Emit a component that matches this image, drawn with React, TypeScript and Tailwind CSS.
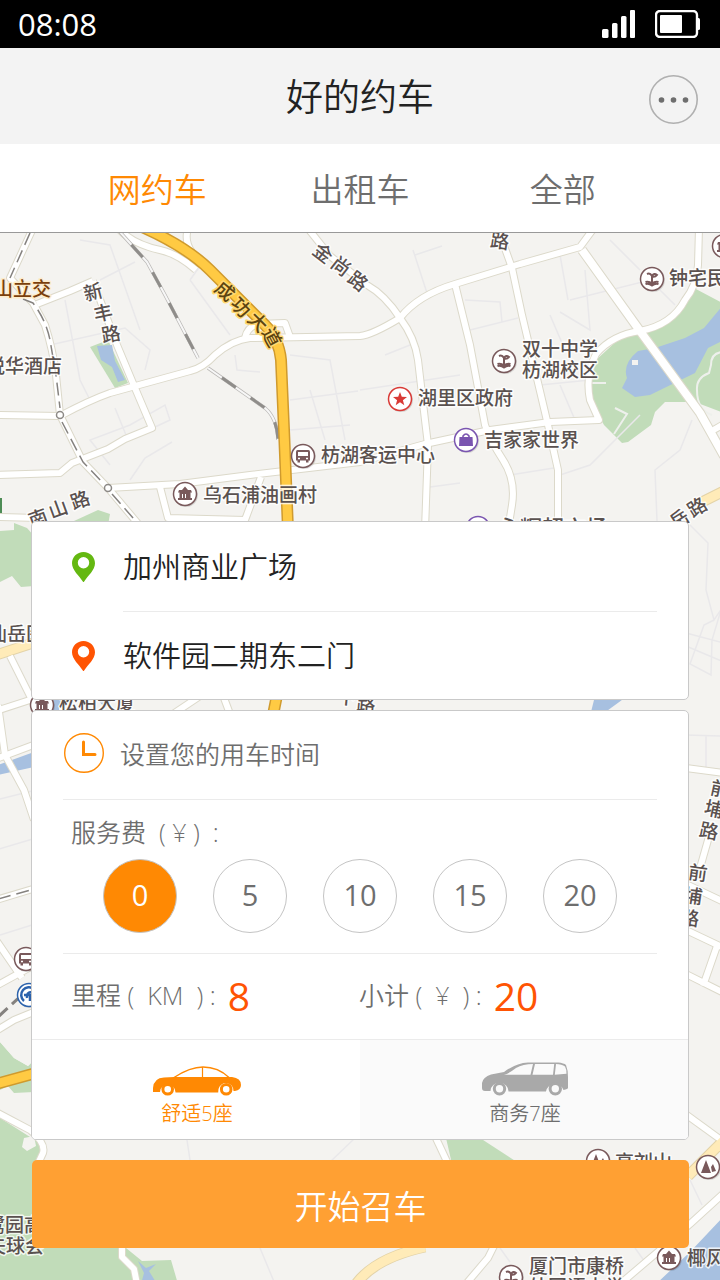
import { useState } from "react";

const HIGHWAYS = [
  "M140 226 C165 237 190 250 210 270 L265 325 Q279 339 281 360 L284 430 L288 530 L286 650 L272 720",
  "M-4 1084 L36 1073",
];

const ROADS = [
  "M34 226 L10 278 L33 303 L45 325 Q53 350 56 375 L60 415 L83 462 L108 488 L145 532",
  "M37 304 L70 291 L93 281",
  "M-4 415 L60 416 Q90 400 110 393 L190 371 Q203 368 215 355 Q232 340 250 338 L360 336 Q372 335 400 318 Q418 295 455 284 L520 264 L580 247 L594 228",
  "M93 281 L117 345 L135 388 L152 428 L125 439 L108 449 L72 463 L60 473 L-4 475",
  "M108 488 L180 484 L250 475 L360 462 L425 444 L490 430 L550 422 L599 420 L590 400 Q585 375 596 354 Q612 335 640 331 Q672 325 685 300 Q697 285 698 265 L699 228",
  "M160 487 L168 518 L245 520 L261 477",
  "M118 228 Q132 244 160 250 Q178 254 196 270",
  "M192 252 Q184 242 188 228",
  "M245 338 Q247 327 258 324 L285 323 L290 337",
  "M306 226 L330 256 L367 285 Q385 295 400 318 Q415 338 418 360 L425 420 L428 445 L425 530",
  "M497 226 L512 268 L522 315 L535 370 L548 425 L558 470 L558 530",
  "M455 284 L470 345 L485 425 Q490 440 503 460 Q516 480 512 505 L508 530",
  "M710 432 L724 424",
  "M-4 517 L38 518",
  "M10 656 L38 712",
  "M-4 711 L36 698",
  "M-2 705 L5 755 L24 790 L34 820",
  "M-4 759 L36 744",
  "M170 716 L200 696",
  "M224 698 L230 714",
  "M-4 900 L36 888",
  "M-4 940 L22 978 M-4 986 L36 964",
  "M-4 1031 L14 1020 L36 1011",
  "M-4 1112 L30 1130 Q46 1143 43 1153 L36 1168",
  "M122 1240 L122 1257 L134 1269 L137 1284",
  "M434 1134 L450 1168",
  "M686 768 L724 773",
  "M712 826 L700 868",
  "M686 884 L724 902 M686 930 L724 948 M717 946 L703 986 M686 974 L724 993",
  "M684 1113 L724 1142",
  "M724 1193 L690 1224 L660 1250 L620 1284",
  "M496 1242 L488 1258 L466 1284",
];

const WIDE_ROADS = ["M582 250 L640 331 L700 413 L724 456"];

const PALE_ROADS = [
  "M-4 655 L36 642",
  "M702 502 L724 491",
  "M724 1140 L688 1176",
  "M356 1284 Q375 1258 425 1247",
];

const LANES = [
  "M50 345 L125 328 L150 350 L145 370 M65 300 L80 380 L90 400",
  "M80 240 L110 245 L140 330 M100 280 L135 262",
  "M110 465 L90 440 L130 425 L165 405 L170 420 L110 448",
  "M115 408 L128 440 M130 480 L145 458 L172 442",
  "M190 280 L200 266 L210 272 M190 280 L230 335",
  "M235 355 L237 370 L260 372 M290 355 L330 360 L345 440 M290 400 L358 391",
  "M290 430 L350 425 M310 390 L325 440",
  "M413 250 L427 293 M415 255 L442 246",
  "M465 300 L500 302 L502 322 M470 330 L518 318",
  "M385 355 L410 345 M360 390 L460 375",
  "M560 255 L568 300 M585 270 L590 330 L560 312",
  "M570 300 L650 280 L675 305 M610 240 L640 270",
  "M550 315 L565 350 M540 385 L590 380 M560 385 L575 420",
  "M692 420 L680 450 L655 470 L657 521 M560 475 L590 465 L640 415",
  "M510 475 L560 467 M430 487 L460 483",
  "M690 525 L708 543 L706 590 L714 620 L724 605 M714 620 L704 625 L690 664 L711 675 L712 640 L724 600 M686 633 L724 643 M686 646 L724 662",
  "M686 735 L724 736 M706 736 V768",
  "M-4 800 L36 790 M-4 850 L36 838 M0 935 L32 925",
  "M187 1140 L190 1160 M330 1162 L355 1138",
  "M260 1248 L275 1284 M500 1248 L510 1262 M635 1248 L645 1262 M690 1180 L702 1205",
];

const RAILS = [
  "M30 233 L10 278 M23 299 L33 303 Q46 320 50 340 L56 375 L60 408 M62 422 L83 462 L104 484 M112 494 L140 526",
];

const TRACKS = [
  "M120 232 L147 262 L165 295 L198 358",
  "M208 368 L265 408 Q277 418 278 440",
];

function Badge({ x, y, kind }: { x: number; y: number; kind: string }) {
  const color =
    kind === "star" ? "#d93a36" : kind === "bag" ? "#7a55b0" : kind === "metro" ? "#2b62ac" : "#79595b";
  return (
    <g transform={`translate(${x} ${y})`}>
      <circle r="12" cx="1" cy="1" fill="#00000022" />
      <circle r="11.5" fill="#fff" stroke={color} strokeWidth="1.5" />
      {kind === "star" && (
        <path d="M0 -7 L1.8 -2.2 L7 -2 L2.9 1.2 L4.3 6.2 L0 3.3 L-4.3 6.2 L-2.9 1.2 L-7 -2 L-1.8 -2.2 Z" fill={color} />
      )}
      {kind === "bag" && (
        <>
          <path d="M-6.5 -3 H6.5 L7 6 H-7 Z" fill={color} />
          <path d="M-3 -1 V-4 Q0 -8 3 -4 V-1" fill="none" stroke={color} strokeWidth="1.6" />
        </>
      )}
      {kind === "bus" && (
        <path
          fillRule="evenodd"
          fill={color}
          d="M-5.5 -6 H5.5 Q7 -6 7 -4 V4.500 H5.500 V6.500 H3 V4.500 H-3 V6.500 H-5.500 V4.500 H-7 V-4 Q-7 -6 -5.500 -6 Z M-5 -4 V0 H5 V-4 Z M-5 1.800 V3.200 H-3 V1.800 Z M3 1.800 V3.200 H5 V1.800 Z"
        />
      )}
      {kind === "hall" && (
        <path
          fill={color}
          fillRule="evenodd"
          d="M0 -7.500 L3 -4 H6 L7 -1.500 H5.500 V4 H7 V6 H-7 V4 H-5.500 V-1.500 H-7 L-6 -4 H-3 Z M-3 0 V4 H-2 V0 Z M0 0 V4 H1 V0 Z"
        />
      )}
      {kind === "school" && (
        <path
          d="M-5 -5 Q-2 -6.500 0 -3 Q2 -6.500 5 -4 Q3 -1.500 0 -2.500 V4 M-6.500 3 Q-3 2 0 4.500 Q3 2 6.500 3 M-6.500 5 Q-3 4 0 6.500 Q3 4 6.500 5"
          fill="none"
          stroke={color}
          strokeWidth="2"
        />
      )}
      {kind === "trees" && <path d="M-2 -7 L3 6 H-7 Z M5 -3 L8 4 L4 5 L3 0 Z" fill={color} />}
      {kind === "metro" && (
        <path d="M5 -6 A7.500 7.500 0 0 0 -5 6 M3 -3 Q-3 -3 -2 3 M-5 0 H5 V7 M1 0 V6" fill="none" stroke={color} strokeWidth="2.500" />
      )}
    </g>
  );
}

const BADGES = [
  { x: 652, y: 279, kind: "school" },
  { x: 724, y: 246, kind: "hall" },
  { x: 504, y: 361, kind: "school" },
  { x: 400, y: 399, kind: "star" },
  { x: 466, y: 440, kind: "bag" },
  { x: 303, y: 456, kind: "bus" },
  { x: 185, y: 494, kind: "hall" },
  { x: 478, y: 528, kind: "bag" },
  { x: 42, y: 705, kind: "hall" },
  { x: 26, y: 959, kind: "bus" },
  { x: 29, y: 995, kind: "metro" },
  { x: 598, y: 1161, kind: "trees" },
  { x: 708, y: 1167, kind: "trees" },
  { x: 511, y: 1277, kind: "school" },
  { x: 669, y: 1258, kind: "hall" },
];

const PLACES = [
  { x: -14, y: 373, text: "悦华酒店", size: 19 },
  { x: 669, y: 285, text: "钟宅民俗", size: 19 },
  { x: 522, y: 356, text: "双十中学", size: 19 },
  { x: 522, y: 377, text: "枋湖校区", size: 19 },
  { x: 418, y: 405, text: "湖里区政府", size: 19 },
  { x: 484, y: 447, text: "吉家家世界", size: 19 },
  { x: 321, y: 462, text: "枋湖客运中心", size: 19 },
  { x: 203, y: 502, text: "乌石浦油画村", size: 19 },
  { x: 498, y: 536, text: "永辉超市场", size: 22 },
  { x: -12, y: 641, text: "仙岳医", size: 19 },
  { x: 59, y: 710, text: "松柏大厦", size: 19 },
  { x: -14, y: 1232, text: "鹭园高尔", size: 19 },
  { x: -13, y: 1253, text: "夫球会", size: 19 },
  { x: 615, y: 1169, text: "高刘山", size: 19 },
  { x: 529, y: 1273, text: "厦门市康桥", size: 19 },
  { x: 529, y: 1294, text: "外国语中学", size: 19 },
  { x: 687, y: 1265, text: "椰风寨", size: 19 },
];

const STREET_SIGNS = [
  { x: 93, y: 292, r: -15, char: "新" },
  { x: 103, y: 313, r: -12, char: "丰" },
  { x: 111, y: 334, r: -10, char: "路" },
  { x: 323, y: 253, r: 38, char: "金" },
  { x: 341, y: 266, r: 38, char: "尚" },
  { x: 358, y: 281, r: 38, char: "路" },
  { x: 500, y: 241, r: 8, char: "路" },
  { x: 38, y: 518, r: -20, char: "南" },
  { x: 58, y: 509, r: -20, char: "山" },
  { x: 80, y: 500, r: -20, char: "路" },
  { x: 679, y: 519, r: -32, char: "岳" },
  { x: 697, y: 507, r: -32, char: "路" },
  { x: 366, y: 704, r: 5, char: "路" },
  { x: 347, y: 697, r: 5, char: "下" },
  { x: 720, y: 789, r: 12, char: "前" },
  { x: 714, y: 809, r: 12, char: "埔" },
  { x: 709, y: 831, r: 12, char: "路" },
  { x: 698, y: 873, r: 8, char: "前" },
  { x: 693, y: 896, r: 8, char: "埔" },
  { x: 690, y: 918, r: 8, char: "路" },
];

const HIGHWAY_SIGNS = [
  { x: 225, y: 291, r: 40, char: "成" },
  { x: 241, y: 307, r: 45, char: "功" },
  { x: 258, y: 322, r: 45, char: "大" },
  { x: 272, y: 337, r: 62, char: "道" },
];

function CityMap() {
  return (
    <svg
      className="absolute inset-0 h-full w-full font-medium"
      viewBox="0 233 720 1047"
      preserveAspectRatio="xMidYMin slice"
      role="img"
      aria-label="地图"
    >
      <rect y="233" width="720" height="1047" fill="#f4f3f0" />
      <g fill="#c1dcb9">
        <path d="M90 347 L108 340 L128 383 L115 388 Z" />
        <path d="M694 288 L724 304 V413 L695 402 L665 402 L655 412 L651 425 L628 442 L622 443 L604 425 L588 395 L596 360 L620 338 L650 330 L676 315 Z" />
        <path d="M74 521 L98 510 L110 514 L108 525 H74 Z" />
        <path d="M0 531 L14 530 V523 L27 528 L34 536 V586 L21 587 L12 576 L0 582 Z" />
        <path d="M0 498 H2 V515 H0 Z" fill="#4d8c55" />
        <path d="M0 1042 L14 1058 L28 1066 L34 1060 V1092 L14 1093 L8 1086 L0 1090 Z" />
        <path d="M0 1118 L38 1142 L44 1162 V1248 H126 L142 1261 L171 1260 L178 1284 H0 Z" />
        <path d="M446 1138 H480 L520 1164 H452 Z" />
      </g>
      <path d="M0 1042 L14 1058 L28 1066 L34 1060 V1036 H4 Z" fill="#f4f3f0" />
      <g fill="#a7c0e0">
        <path d="M97 346 L112 345 L115 361 L125 380 L118 382 L112 367 L101 360 Z" />
        <path d="M724 304 L704 328 L685 338 L655 348 L638 351 Q622 364 627 378 L622 388 L635 397 L650 395 L695 373 L708 348 L724 340 Z" />
        <path d="M-2 765 L34 752 V767 L-2 775 Z" />
        <path d="M595 696 L626 697 L600 716 H590 Z" />
        <path d="M54 696 H62 L58 714 H52 Z M98 700 H112 L105 708 Z" />
        <path d="M724 1216 L690 1252 L656 1284 H724 Z" />
        <path d="M138 1261 L146 1268 L156 1264 L149 1271 L157 1284 H141 L144 1273 Z" />
      </g>
      <path d="M632 360 H638 V365 H632 Z M24 1138 L34 1136 L36 1146 L27 1151 L22 1147 Z" fill="#f4f3f0" />
      <path d="M724 352 Q711 352 711 365 L709 373 Q696 378 697 390 Q697 410 712 415" fill="none" stroke="#eef0ec" strokeWidth="2" />
      <path d="M615 408 L627 414 L614 434 M588 383 H606" fill="none" stroke="#eef0ec" strokeWidth="2" />
      <g fill="none" stroke="#e9e8ea" strokeWidth="1.5">
        {LANES.map((d) => (
          <path key={d} d={d} />
        ))}
      </g>
      <g fill="none" strokeLinejoin="round">
        {ROADS.map((d) => (
          <path key={d} d={d} stroke="#dcd9ca" strokeWidth="8" />
        ))}
        {WIDE_ROADS.map((d) => (
          <path key={d} d={d} stroke="#dcd9ca" strokeWidth="10" />
        ))}
        {PALE_ROADS.map((d) => (
          <path key={d} d={d} stroke="#e3d3a8" strokeWidth="11" />
        ))}
        {ROADS.map((d) => (
          <path key={d} d={d} stroke="#fff" strokeWidth="6" />
        ))}
        {WIDE_ROADS.map((d) => (
          <path key={d} d={d} stroke="#fff" strokeWidth="8" />
        ))}
        {PALE_ROADS.map((d) => (
          <path key={d} d={d} stroke="#ffebb8" strokeWidth="9" />
        ))}
        {RAILS.map((d) => (
          <path key={d} d={d} stroke="#85827f" strokeWidth="1.500" strokeDasharray="13 6" />
        ))}
        {TRACKS.map((d) => (
          <g key={d}>
            <path d={d} stroke="#bab8b6" strokeWidth="3.500" />
            <path d={d} stroke="#f7f7f7" strokeWidth="2" />
            <path d={d} stroke="#8f8d8a" strokeWidth="3" strokeDasharray="17 18" strokeDashoffset="-17" />
          </g>
        ))}
        {HIGHWAYS.map((d) => (
          <path key={d} d={d} stroke="#cf9a2e" strokeWidth="12" />
        ))}
        {HIGHWAYS.map((d) => (
          <path key={d} d={d} stroke="#ffca43" strokeWidth="9" />
        ))}
        <path d="M-2 1017 L24 993" stroke="#85827f" strokeWidth="3" strokeDasharray="13 6" />
        <path d="M-2 899 L34 889" stroke="#85827f" strokeWidth="1.500" strokeDasharray="13 6" />
      </g>
      <g fill="#fff" stroke="#8d8a87" strokeWidth="1.500">
        <circle cx="60" cy="415" r="3.500" />
        <circle cx="108" cy="488" r="3.500" />
      </g>
      {BADGES.map((b) => (
        <Badge key={`${b.x}-${b.y}`} {...b} />
      ))}
      <g fill="#5a514f" stroke="#ffffffcc" strokeWidth="3" paintOrder="stroke" strokeLinejoin="round">
        {PLACES.map((p) => (
          <text key={p.text} x={p.x} y={p.y} fontSize={p.size}>
            {p.text}
          </text>
        ))}
        {STREET_SIGNS.map((s) => (
          <text
            key={`${s.x}-${s.y}`}
            transform={`translate(${s.x} ${s.y}) rotate(${s.r})`}
            y="7"
            fontSize="19"
            textAnchor="middle"
          >
            {s.char}
          </text>
        ))}
      </g>
      <g fill="#7a3f0c" stroke="#fdeccb" strokeWidth="3" paintOrder="stroke" strokeLinejoin="round">
        <text x="-6" y="296" fontSize="19">
          山立交
        </text>
        {HIGHWAY_SIGNS.map((s) => (
          <text
            key={s.char}
            transform={`translate(${s.x} ${s.y}) rotate(${s.r})`}
            y="7"
            fontSize="19"
            fill="#5c4410"
            stroke="#ffd873"
            textAnchor="middle"
          >
            {s.char}
          </text>
        ))}
      </g>
    </svg>
  );
}

function StatusBar() {
  return (
    <div className="flex h-12 items-center justify-between bg-black pr-5 pl-[18px] text-[31px] text-white">
      <span className="leading-none">08:08</span>
      <span className="flex items-center gap-5">
        <svg width="33" height="28" viewBox="0 0 33 28" fill="#fff" aria-hidden="true">
          <rect x="0" y="19" width="6.500" height="9" rx="1.5" />
          <rect x="10" y="13" width="5.500" height="15" rx="1.5" />
          <rect x="19" y="6" width="5.500" height="22" rx="1.5" />
          <rect x="28" y="0" width="5" height="28" rx="1" />
        </svg>
        <svg width="45" height="28" viewBox="0 0 45 28" aria-hidden="true">
          <rect x="1" y="1" width="41" height="26" rx="4" fill="none" stroke="#fff" strokeWidth="2.400" />
          <rect x="5" y="5" width="22" height="18" rx="1" fill="#fff" />
          <path d="M42 8 H43.500 Q45 8 45 9.500 V18.500 Q45 20 43.500 20 H42 Z" fill="#fff" />
        </svg>
      </span>
    </div>
  );
}

function Pin({ className }: { className: string }) {
  return (
    <svg width="23" height="30" viewBox="0 0 23 30" className={className} fill="currentColor" aria-hidden="true">
      <path
        fillRule="evenodd"
        d="M11.500 0 C18 0 23 5 23 11.300 C23 18.500 15.500 24 11.500 30.500 C7.500 24 0 18.500 0 11.300 C0 5 5 0 11.500 0 Z M11.500 5 A5.700 5.700 0 1 0 11.500 16.400 A5.700 5.700 0 1 0 11.500 5 Z"
      />
    </svg>
  );
}

function Sedan() {
  return (
    <svg width="88" height="30" viewBox="0 0 88 30" fill="currentColor" aria-hidden="true">
      <path d="M21 11.500 Q37 1 50 1 Q65 1 76 11.500" fill="none" stroke="currentColor" strokeWidth="1.400" />
      <path d="M49.500 1 V12" stroke="currentColor" strokeWidth="1.200" />
      <path d="M0 26 Q-1 12 11 11.500 L21 11 H79 Q88 12 88 19 Q88 24 82 25 L80.500 25 A7.600 7.600 0 0 0 65.500 23 L65.200 26.500 H22.500 A7.700 7.700 0 1 0 7 26 Z" />
      <path
        fillRule="evenodd"
        d="M14.700 17 A6.300 6.300 0 1 0 14.700 29.600 A6.300 6.300 0 1 0 14.700 17 Z M14.700 20 A3.300 3.300 0 1 1 14.700 26.600 A3.300 3.300 0 1 1 14.700 20 Z M73.200 17 A6.300 6.300 0 1 0 73.200 29.600 A6.300 6.300 0 1 0 73.200 17 Z M73.200 20 A3.300 3.300 0 1 1 73.200 26.600 A3.300 3.300 0 1 1 73.200 20 Z"
      />
    </svg>
  );
}

function Van() {
  return (
    <svg width="87" height="34" viewBox="0 0 87 34" fill="currentColor" aria-hidden="true">
      <path
        fillRule="evenodd"
        d="M0 26 V21 Q1 15 9 12.500 L22 10 Q34 1 46 0.500 L76 0.500 Q82 1 84 3 Q86 8 86 15 V26 Q86 27 81.500 28 A9 8.500 0 0 0 64 29.500 H26.500 A9 8.500 0 0 0 8.500 29 H3 Q0 29 0 26 Z M22 12.800 Q27 11.500 34 6 Q41 2 51 2 L48.500 12.800 Z M53 2 H72.200 L71 12.800 H50.500 Z M74 2 Q80 2 83 4.500 Q84.500 7 84.500 11.800 L72.800 12.800 Z"
      />
      <path
        fillRule="evenodd"
        d="M17.500 20 A6.700 6.700 0 1 0 17.500 33.400 A6.700 6.700 0 1 0 17.500 20 Z M17.500 23 A3.700 3.700 0 1 1 17.500 30.400 A3.700 3.700 0 1 1 17.500 23 Z M73.300 20 A6.700 6.700 0 1 0 73.300 33.400 A6.700 6.700 0 1 0 73.300 20 Z M73.300 23 A3.700 3.700 0 1 1 73.300 30.400 A3.700 3.700 0 1 1 73.300 23 Z"
      />
    </svg>
  );
}

const TABS = ["网约车", "出租车", "全部"];
const FEES = [0, 5, 10, 15, 20];
const VEHICLES = [
  { name: "舒适5座", Icon: Sedan },
  { name: "商务7座", Icon: Van },
];

export default function App() {
  const [tab, setTab] = useState("网约车");
  const [fee, setFee] = useState(0);
  const [vehicle, setVehicle] = useState("舒适5座");

  return (
    <div className="flex min-h-screen flex-col bg-white font-['Open_Sans','Noto_Sans_CJK_SC',sans-serif] text-[#222]">
      <StatusBar />
      <header className="grid h-24 grid-cols-[1fr_auto_1fr] items-center bg-[#f3f3f3] px-[22px] pt-1.5">
        <h1 className="col-start-2 pb-1.5 text-[37px] leading-none font-[350]">好的约车</h1>
        <button type="button" aria-label="更多" className="justify-self-end">
          <svg width="49" height="49" viewBox="0 0 49 49" aria-hidden="true">
            <circle cx="24.500" cy="24.500" r="23.700" fill="none" stroke="#b0b0b0" strokeWidth="1.600" />
            <g fill="#6e6e6e">
              <circle cx="12.500" cy="25" r="2.800" />
              <circle cx="24.500" cy="25" r="2.800" />
              <circle cx="36.500" cy="25" r="2.800" />
            </g>
          </svg>
        </button>
      </header>
      <nav className="flex border-b border-[#999] px-14">
        {TABS.map((name) => (
          <button
            key={name}
            type="button"
            onClick={() => setTab(name)}
            className={`h-[88px] flex-1 pt-1 text-[33px] font-[350] ${tab === name ? "text-[#ff8903]" : "text-[#6e6e6e]"}`}
          >
            {name}
          </button>
        ))}
      </nav>

      <main className="relative flex-1 overflow-hidden">
        <CityMap />
        <form
          className="relative flex flex-col px-[31px] pt-72 pb-8 font-[350]"
          onSubmit={(e) => e.preventDefault()}
        >
          <section className="rounded-[5px] border border-[#c9c9c9] bg-white text-[29px]">
            <button type="button" className="flex w-full items-center gap-7 pr-[31px] pl-10 text-left">
              <Pin className="text-[#64b811]" />
              <span className="flex h-[90px] flex-1 items-center border-b border-[#ebebeb]">加州商业广场</span>
            </button>
            <button type="button" className="flex w-full items-center gap-7 pr-[31px] pl-10 text-left">
              <Pin className="text-[#ff5403]" />
              <span className="flex h-[87px] flex-1 items-center">软件园二期东二门</span>
            </button>
          </section>

          <section className="mt-[10px] overflow-hidden rounded-[5px] border border-[#c9c9c9] bg-white text-[25px] text-[#6e6e6e]">
            <div className="px-[31px]">
              <button
                type="button"
                className="flex h-[89px] w-full items-center gap-4 border-b border-[#ebebeb] pb-1 pl-px text-left"
              >
                <svg width="40" height="40" viewBox="0 0 40 40" fill="none" stroke="#ff8903" aria-hidden="true">
                  <circle cx="20" cy="20" r="19.300" strokeWidth="1.400" />
                  <path d="M19.500 9 V21.500 H31" strokeWidth="3" strokeLinecap="round" />
                </svg>
                <span className="pt-1">设置您的用车时间</span>
              </button>
              <fieldset className="h-[154px] border-b border-[#ebebeb] pt-3">
                <legend className="float-left w-full pl-2 leading-10">服务费&nbsp; ( ¥ )&nbsp; :</legend>
                <div className="flex w-full justify-center gap-9 pt-[7px] text-[29px] font-normal">
                  {FEES.map((value) => (
                    <label
                      key={value}
                      className={`flex size-[74px] items-center justify-center rounded-full border border-[#c4c4c4] pb-0.5 ${
                        fee === value ? "bg-[#ff8903] text-white" : "bg-white"
                      }`}
                    >
                      <input
                        type="radio"
                        name="fee"
                        value={value}
                        checked={fee === value}
                        onChange={() => setFee(value)}
                        className="sr-only"
                      />
                      {value}
                    </label>
                  ))}
                </div>
              </fieldset>
              <div className="grid h-[85px] grid-cols-[288px_1fr] items-center pb-0.5 pl-2">
                <p className="flex items-center gap-3">
                  <span>里程&nbsp;(&nbsp; KM&nbsp; ) :</span>
                  <output className="text-[39px] leading-none font-normal text-[#ff5403]">8</output>
                </p>
                <p className="flex items-center gap-3">
                  <span>小计&nbsp;(&nbsp; ¥&nbsp; ) :</span>
                  <output className="text-[39px] leading-none font-normal text-[#ff5403]">20</output>
                </p>
              </div>
            </div>
            <div className="grid grid-cols-2 border-t border-[#ebebeb] text-[20px]">
              {VEHICLES.map(({ name, Icon }) => (
                <label
                  key={name}
                  className={`flex h-[99px] flex-col items-center justify-end gap-1 pb-[11px] pl-0.5 ${
                    vehicle === name ? "bg-white text-[#ff8903]" : "bg-[#fafafa] text-[#a9a9a9]"
                  }`}
                >
                  <input
                    type="radio"
                    name="vehicle"
                    value={name}
                    checked={vehicle === name}
                    onChange={() => setVehicle(name)}
                    className="sr-only"
                  />
                  <Icon />
                  <span className={vehicle === name ? "leading-7" : "leading-7 text-[#6e6e6e]"}>{name}</span>
                </label>
              ))}
            </div>
          </section>

          <button
            type="submit"
            className="mt-5 ml-px h-[88px] rounded-[5px] bg-[#ffa033] pt-1.5 text-[33px] text-white"
          >
            开始召车
          </button>
        </form>
      </main>
    </div>
  );
}
